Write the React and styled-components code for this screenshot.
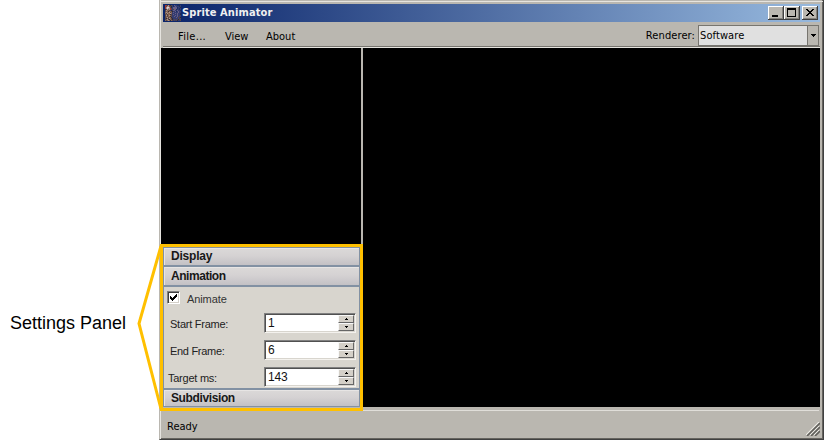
import React from 'react';
import styled, { createGlobalStyle } from 'styled-components';

const Global = createGlobalStyle`
  * { box-sizing: border-box; }
  body { margin: 0; background: #fff; overflow: hidden; }
`;

const Page = styled.main`
  position: relative;
  display: grid;
  grid-template-columns: 159px 665px;
  width: 824px;
  height: 440px;
  background: #fff;
  color: #000;
`;

const Caption = styled.aside`
  padding: 312px 0 0 10px;
  font: 18px/22px 'Liberation Sans', sans-serif;
  white-space: nowrap;
`;

const Frame = styled.section`
  display: flex;
  flex-direction: column;
  height: 440px;
  background: #bab7b0;
  border: solid;
  border-width: 0 1px 1px 1px;
  border-color: #bab7b0 #404040 #404040 #bab7b0;
  box-shadow: inset 1px 0 #e6e4df, inset -1px -1px #66645f;
`;

const TitleBar = styled.header`
  display: flex;
  align-items: center;
  flex: none;
  height: 18px;
  margin: 4px 3px 0 3px;
  padding: 0 2px;
  background: linear-gradient(90deg, #0a246a, #98badf);
`;

const TopEdge = styled.div`
  flex: none;
  height: 1px;
  margin: 1px 0 -2px;
  background: #e6e4df;
`;

const Label = styled.span`
  display: block;
  flex: none;
  white-space: pre;
  font-family: ${p => (p.$sans ? "'Liberation Sans'" : "'DejaVu Sans Condensed', 'DejaVu Sans'")}, sans-serif;
  font-stretch: ${p => (p.$sans ? 'normal' : 'condensed')};
  font-size: ${p => p.$size || 11}px;
  font-weight: ${p => (p.$bold ? 700 : 400)};
  line-height: 14px;
  letter-spacing: ${p => p.$track || 0}px;
  width: ${p => (p.$w ? `${p.$w}px` : 'auto')};
  color: ${p => p.$color || '#000'};
`;

const SpriteIcon = styled.svg`
  width: 16px;
  height: 16px;
  margin-right: 1px;
`;

const WindowButtons = styled.div`
  display: flex;
  margin-left: auto;
`;

const WindowButton = styled.button`
  width: 16px;
  height: 14px;
  padding: 0;
  border: 0;
  margin-left: ${p => p.$gap || 0}px;
  background: #bab7b0;
  box-shadow: inset -1px -1px #404040, inset 1px 1px #fff, inset -2px -2px #85837e;
  svg { display: block; }
`;

const MenuBar = styled.nav`
  display: flex;
  flex: none;
  height: 24px;
  margin-left: 3px;
  padding: 8px 4px 0 15px;
`;

const Renderer = styled.div`
  display: flex;
  margin-left: auto;
  margin-top: -1px;
`;

const Combo = styled.div`
  display: flex;
  width: 121px;
  height: 21px;
  margin: -4px 0 0 3px;
  border: 1px solid #77756f;
  background: #e0e0e0;
  padding: 3px 0 0 1px;
`;

const ComboArrow = styled.div`
  width: 11px;
  height: 19px;
  margin: -3px 0 0 auto;
  border-left: 1px solid #77756f;
  background: #bab7b0;
  svg { display: block; }
`;

const Groove = styled.div`
  flex: none;
  height: 2px;
  margin: 0 3px 0 3px;
  border-top: 1px solid #77756f;
  background: #e6e4df;
`;

const Workspace = styled.div`
  display: grid;
  flex: none;
  grid-template-columns: 200px 1fr;
  column-gap: 2px;
  height: 359px;
  margin: 0 3px 0 1px;
  background: #bab7b0;
`;

const Side = styled.div`
  display: flex;
  flex-direction: column;
  background: #000;
`;

const Canvas = styled.div`
  background: #000;
`;

const Settings = styled.div`
  margin: 199px 1px 0 2px;
  height: 160px;
  background: #d8d5ce;
  border: 1px solid #8291a3;
`;

const SectionHead = styled.div`
  height: ${p => p.$h || 20}px;
  padding: ${p => p.$pad || 0}px 0 0 7px;
  border: solid #8291a3;
  border-width: ${p => (p.$last ? '2px 0 0' : '0 0 2px')};
  background: linear-gradient(#dbd9d8, #d5d2d3 45%, #c3c1c5);
  box-shadow: inset 1px 1px #e7e5e4;
`;

const Fields = styled.div`
  height: 101px;
  padding: 4px 0 0 3px;
`;

const CheckRow = styled.label`
  display: flex;
  height: 22px;
  > span:last-child { margin-top: 1px; }
`;

const CheckBox = styled.span`
  width: 13px;
  height: 13px;
  margin-right: 7px;
  background: #fff;
  border: 1px solid;
  border-color: #808080 #fff #fff #808080;
  box-shadow: inset 1px 1px #404040, inset -1px -1px #d4d0c8;
  svg { display: block; }
`;

const FieldRow = styled.div`
  display: flex;
  height: 27px;
  padding-left: ${p => p.$indent}px;
  > span { margin-top: 4px; }
`;

const Spinner = styled.div`
  display: flex;
  width: 92px;
  height: 20px;
  margin-left: auto;
  margin-right: 3px;
  padding: 2px 0 0 3px;
  background: #fff;
  border: 1px solid;
  border-color: #808080 #f4f2ee #f4f2ee #808080;
  box-shadow: inset 1px 1px #505050, inset -1px -1px #d8d5ce;
`;

const Steps = styled.div`
  display: grid;
  grid-template-rows: 8px 8px;
  width: 16px;
  height: 16px;
  margin: -1px 1px 0 auto;
`;

const Step = styled.button`
  padding: 0;
  border: 1px solid;
  border-color: #f8f8f8 #666 #666 #f8f8f8;
  background: #d4d0c8;
  svg { display: block; }
`;

const StatusBar = styled.footer`
  display: flex;
  flex: 1;
  margin: 3px 4px 0 1px;
  padding: 9px 0 0 6px;
  border-top: 1px solid #e0ded9;
`;

const Grip = styled.svg`
  width: 14px;
  height: 14px;
  margin: 2px -1px 0 auto;
`;

const Bracket = styled.svg`
  position: absolute;
  left: 0;
  top: 0;
  pointer-events: none;
`;

const spriteRows = [
  'rrmhmkmbnubbnnkb', 'rmhhrmkbnbubbbnb', 'rhwwhmkbuuuunbbk', 'rhwhhrmbuuuunbnb',
  'kmhohrmbbounbbnb', 'mhoombkbuubbubbn', 'mookoomkbbunbubb', 'ohoohmobubbbbubb',
  'omhoohobbbububbn', 'momookmbubbbubbk', 'mhmohombbbububbb', 'momookmbbubbubmb',
  'mohmookbbbbubmbk', 'mkomhomkbbbbbmbm', 'mohmkomkbmbmbkmb', 'omohokombmbmkbbm',
];
const spriteColors = { r: '#a43730', h: '#a8948f', w: '#d8d2d4', k: '#2f2b38', m: '#594646', o: '#876450', b: '#343c70', n: '#1b2c64', u: '#665f88' };

const Sprite = () => (
  <SpriteIcon viewBox="0 0 16 16" shapeRendering="crispEdges">
    {spriteRows.flatMap((row, y) => [...row].map((c, x) => (
      <rect key={`${x}-${y}`} x={x} y={y} width="1" height="1" fill={spriteColors[c]} />
    )))}
  </SpriteIcon>
);

const NumberField = ({ label, value, indent, track }) => (
  <FieldRow $indent={indent}>
    <Label $sans $track={track} $color="#222">{label}</Label>
    <Spinner>
      <Label $sans $size={12} $color="#111" $track={-0.2}>{value}</Label>
      <Steps>
        <Step><svg width="14" height="6" shapeRendering="crispEdges"><path d="M7 2h1v1h1v1H6V3h1z" /></svg></Step>
        <Step><svg width="14" height="6" shapeRendering="crispEdges"><path d="M6 2h3v1H8v1H7V3H6z" /></svg></Step>
      </Steps>
    </Spinner>
  </FieldRow>
);

export default function App() {
  return (
    <Page>
      <Global />
      <Caption>Settings Panel</Caption>
      <Frame>
        <TopEdge />
        <TitleBar>
          <Sprite />
          <Label $bold $color="#f0f0f0" $track={0.1}>Sprite Animator</Label>
          <WindowButtons>
            <WindowButton><svg width="16" height="14" shapeRendering="crispEdges"><path d="M4 9h6v2H4z" /></svg></WindowButton>
            <WindowButton><svg width="16" height="14" shapeRendering="crispEdges"><path fillRule="evenodd" d="M3 2h9v9H3zM4 4v6h7V4z" /></svg></WindowButton>
            <WindowButton $gap={2}><svg width="16" height="14" shapeRendering="crispEdges"><path d="M4 3h2v1h1v1h2V4h1V3h2v1h-1v1h-1v1H9v1h1v1h1v1h1v1h-2V9H9V8H7v1H6v1H4V9h1V8h1V7h1V6H6V5H5V4H4z" /></svg></WindowButton>
          </WindowButtons>
        </TitleBar>
        <MenuBar>
          <Label $w={47} $track={0.3}>File...</Label>
          <Label $w={41}>View</Label>
          <Label>About</Label>
          <Renderer>
            <Label $track={0.1}>Renderer:</Label>
            <Combo>
              <Label $track={0.1}>Software</Label>
              <ComboArrow><svg width="10" height="19" shapeRendering="crispEdges"><path d="M3 8h5v1H7v1H6v1H5v-1H4V9H3z" /></svg></ComboArrow>
            </Combo>
          </Renderer>
        </MenuBar>
        <Groove />
        <Workspace>
          <Side>
            <Settings>
              <SectionHead $h={19} $pad={1}><Label $sans $bold $size={12} $color="#181818" $track={-0.2}>Display</Label></SectionHead>
              <SectionHead $pad={2}><Label $sans $bold $size={12} $color="#181818" $track={-0.45}>Animation</Label></SectionHead>
              <Fields>
                <CheckRow>
                  <CheckBox><svg width="11" height="11" shapeRendering="crispEdges"><path d="M2 4h1v1h1v1h1V5h1V4h1V3h1V2h1v3H8v1H7v1H6v1H5v1H4V8H3V7H2z" /></svg></CheckBox>
                  <Label $sans $color="#333" $track={-0.1}>Animate</Label>
                </CheckRow>
                <NumberField label="Start Frame:" value="1" indent={3} track={-0.25} />
                <NumberField label="End Frame:" value="6" indent={3} track={-0.3} />
                <NumberField label="Target ms:" value="143" indent={1} track={-0.25} />
              </Fields>
              <SectionHead $last $h={18} $pad={1}><Label $sans $bold $size={12} $color="#181818" $track={-0.38}>Subdivision</Label></SectionHead>
            </Settings>
          </Side>
          <Canvas />
        </Workspace>
        <StatusBar>
          <Label>Ready</Label>
          <Grip viewBox="0 0 14 14">
            <path d="M0 13L13 0M4 13L13 4M8 13L13 8" stroke="#eeece7" strokeWidth="1.2" />
            <path d="M1 14L14 1M5 14L14 5M9 14L14 9" stroke="#62615c" strokeWidth="1.7" />
          </Grip>
        </StatusBar>
      </Frame>
      <Bracket width="824" height="440">
        <path d="M161 246L139 323.5L161 409" fill="none" stroke="#ffc000" strokeWidth="3" />
        <rect x="161.5" y="245.5" width="200" height="164" fill="none" stroke="#ffc000" strokeWidth="3" />
      </Bracket>
    </Page>
  );
}
